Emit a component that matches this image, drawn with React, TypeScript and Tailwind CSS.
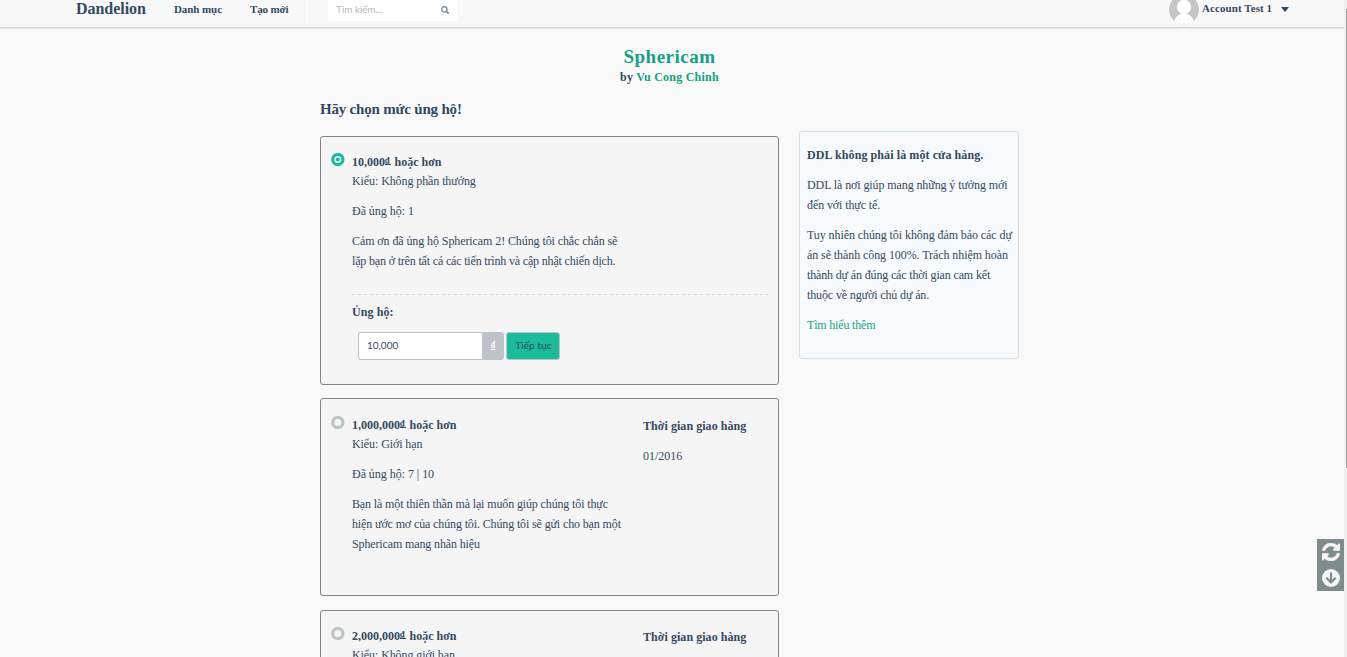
import { ReactNode } from "react";

function SearchIcon() {
  return (
    <svg className="mt-[6px] h-[8px] w-[8px] text-[#84939f]" viewBox="0 0 8 8" fill="none" stroke="currentColor">
      <circle cx="3.4" cy="3.4" r="2.7" strokeWidth="1.4" />
      <path d="M5.4 5.4l2 2" strokeWidth="1.7" strokeLinecap="round" />
    </svg>
  );
}

function RefreshIcon() {
  return (
    <svg className="h-[18px] w-[18px]" viewBox="0 0 1536 1536" fill="currentColor">
      <path
        stroke="currentColor"
        strokeWidth="50"
        d="M1511 928q0 5-1 7-64 268-268 434.500T764 1536q-146 0-282.500-55T238 1324l-129 129q-19 19-45 19t-45-19-19-45V960q0-26 19-45t45-19h448q26 0 45 19t19 45-19 45l-137 137q71 66 161 102t187 36q134 0 250-65t186-179q11-17 53-117 8-23 30-23h192q13 0 22.500 9.500t9.500 22.500zm25-800v448q0 26-19 45t-45 19h-448q-26 0-45-19t-19-45 19-45l138-138Q969 256 768 256q-134 0-250 65T332 500q-11 17-53 117-8 23-30 23H50q-13 0-22.500-9.500T18 608v-7q65-268 270-434.500T768 0q146 0 284 55.500T1297 212l130-129q19-19 45-19t45 19 19 45z"
      />
    </svg>
  );
}

function DownIcon() {
  return (
    <svg className="h-[18px] w-[18px]" viewBox="0 0 18 18" fill="none">
      <circle cx="9" cy="9" r="9" fill="currentColor" />
      <path d="M9 3.500v9.500M4.300 8.800L9 13.500l4.700-4.700" stroke="#7f8c8d" strokeWidth="2.200" />
    </svg>
  );
}

function Radio({ checked }: { checked?: boolean }) {
  return (
    <svg className="h-[14px] w-[14px]" viewBox="0 0 14 14">
      <circle cx="6.8" cy="6.5" r="5.1" fill="none" stroke={checked ? "#1abc9c" : "#bdc3c7"} strokeWidth="3.2" />
      {checked && <circle cx="6.8" cy="6.5" r="2" fill="#1abc9c" />}
    </svg>
  );
}

function Header() {
  return (
    <header className="flex h-[28px] shrink-0 items-start border-b border-[#d0d2d4] bg-[#f8f8f8] font-bold shadow-[0_1px_1px_#e8e8e8]">
      <a className="ml-[76px] w-[98px] text-[16px] leading-[18px] tracking-[-0.04px]">Dandelion</a>
      <a className="w-[76px] text-[11px] leading-[18px] tracking-[-0.08px]">Danh mục</a>
      <a className="w-[57px] text-[11px] leading-[18px] tracking-[-0.15px]">Tạo mới</a>
      <div className="h-[25px] w-px bg-white" />
      <div className="ml-[20px] flex h-[21px] w-[129px] items-start justify-between rounded-b-[3px] bg-white pr-[8px] pl-[8px] font-[Lato,sans-serif] text-[10px] leading-[19px] font-normal tracking-[-0.1px] text-[#b2bac2]">
        <span>Tìm kiếm...</span>
        <SearchIcon />
      </div>
      <div className="ml-auto flex h-[25px] w-[175px] items-start">
        <svg className="h-[25px] w-[30px]" viewBox="0 0 30 25">
          <defs>
            <clipPath id="avatar">
              <circle cx="15" cy="9.500" r="15" />
            </clipPath>
          </defs>
          <g clipPath="url(#avatar)">
            <rect width="30" height="25" fill="#c5c5c5" />
            <ellipse cx="15" cy="7" rx="7.2" ry="7.200" fill="#fff" />
            <path d="M4.500 25C5 18 9 13.500 15 13.500S25 18 25.500 25z" fill="#fff" />
          </g>
        </svg>
        <span className="ml-[3px] text-[11px] leading-[17px] tracking-[0.08px]">Account Test 1</span>
        <span className="mt-[7px] ml-[9px] h-0 w-0 border-x-[4px] border-t-[5px] border-x-transparent border-t-[#34495e]" />
      </div>
    </header>
  );
}

type RewardProps = {
  amount: string;
  kind: string;
  backers: string;
  lines: string[];
  delivery?: string;
  checked?: boolean;
  className: string;
  textClassName: string;
  radioClassName: string;
  children?: ReactNode;
};

function Reward({ amount, kind, backers, lines, delivery, checked, className, textClassName, radioClassName, children }: RewardProps) {
  return (
    <section className={"flex shrink-0 rounded-[3px] border border-[#7f8488] bg-[#f5f5f5] " + className}>
      <div className={"w-[31px] shrink-0 pl-[10px] " + radioClassName}>
        <Radio checked={checked} />
      </div>
      <div className={"flex-1 " + textClassName}>
        <div className="flex">
          <div className="w-[291px] whitespace-nowrap">
            <p className="font-bold">
              {amount}
              <span className="relative -top-[3px] mr-px inline-block h-[8px] w-[5.500px] border-b border-[#34495e] align-baseline text-[9px] leading-[6px]">₫</span> hoặc hơn
            </p>
            <p className="-mt-px tracking-[-0.09px]">Kiểu: {kind}</p>
            <p className="mt-[10px] tracking-[-0.04px]">Đã ủng hộ: {backers}</p>
            <div className="mt-[10px]">
              {lines.map((line, i) => (
                <p key={line} className={checked ? (i === 0 ? "tracking-[-0.09px]" : "tracking-[-0.17px]") : "tracking-[-0.13px]"}>
                  {line}
                </p>
              ))}
            </div>
          </div>
          {delivery && (
            <div className="pt-px">
              <p className="font-bold tracking-[0.05px]">Thời gian giao hàng</p>
              <p className="mt-[10px]">{delivery}</p>
            </div>
          )}
        </div>
        {children}
      </div>
    </section>
  );
}

function PledgeForm() {
  return (
    <div className="mt-[23px] mr-[10px]">
      <svg className="block h-px w-full">
        <line x1="0" y1="0.500" x2="417" y2="0.500" stroke="#d5d8da" strokeDasharray="3 3" />
      </svg>
      <p className="mt-[7px] font-bold tracking-[0.1px]">Ủng hộ:</p>
      <div className="mt-[10px] ml-[6px] flex h-[28px] font-[Lato,sans-serif] text-[10px] leading-[25px]">
        <div className="w-[124px] rounded-l-[3px] border border-r-0 border-[#bdc3c7] bg-white pl-[8px]">10,000</div>
        <div className="flex w-[22px] items-start justify-center rounded-r-[3px] bg-[#bdc3c7] pt-[9px] font-['Liberation_Serif',serif] text-[8px] font-bold text-white">
          <span className="h-[9px] border-b border-white leading-[7px]">₫</span>
        </div>
        <button className="ml-[2px] flex w-[54px] items-start justify-center rounded-[3px] border border-[#bdc3c7] bg-[#1abc9c] pl-px text-[10px] leading-[25px] tracking-[0.1px] whitespace-nowrap">
          Tiếp tục
        </button>
      </div>
    </div>
  );
}

function Notice() {
  return (
    <aside className="-mt-[5px] ml-[20px] h-[228px] w-[220px] shrink-0 rounded-[3px] border border-[#d9dce0] bg-[#f6fafc] pt-[13px] pl-[7px] whitespace-nowrap">
      <p className="font-bold tracking-[0.09px]">DDL không phải là một cửa hàng.</p>
      <p className="mt-[10px] tracking-[-0.1px]">
        DDL là nơi giúp mang những ý tưởng mới
        <br />
        đến với thực tế.
      </p>
      <p className="mt-[10px] tracking-[-0.08px]">
        Tuy nhiên chúng tôi không đảm bảo các dự
        <br />
        án sẽ thành công 100%. Trách nhiệm hoàn
        <br />
        <span className="tracking-[-0.15px]">thành dự án đúng các thời gian cam kết</span>
        <br />
        <span className="tracking-[-0.13px]">thuộc về người chủ dự án.</span>
      </p>
      <a className="mt-[10px] block tracking-[-0.18px] text-[#16a085]">Tìm hiểu thêm</a>
    </aside>
  );
}

export default function App() {
  return (
    <div className="flex h-[657px] overflow-hidden bg-[#f9f9f9] font-['Liberation_Serif',serif] text-[12px] leading-[20px] text-[#34495e]">
      <div className="flex w-[1344px] shrink-0 flex-col">
        <Header />
        <div className="mt-[17px] w-[1339px] shrink-0 text-center font-bold">
          <h1 className="text-[19px] leading-[24px] tracking-[0.5px] text-[#16a085]">Sphericam</h1>
          <p className="-mt-[2px] tracking-[0.24px]">
            by <span className="text-[#16a085]">Vu Cong Chinh</span>
          </p>
        </div>
        <h2 className="mt-[12px] ml-[320px] h-[37px] shrink-0 text-[15px] leading-[20px] font-bold tracking-[-0.2px]">Hãy chọn mức ủng hộ!</h2>
        <main className="ml-[320px] flex items-start">
          <div className="flex w-[459px] shrink-0 flex-col">
            <Reward
              className="h-[249px]"
              textClassName="pt-[15px]"
              radioClassName="pt-[16px]"
              checked
              amount="10,000"
              kind="Không phần thưởng"
              backers="1"
              lines={["Cảm ơn đã ủng hộ Sphericam 2! Chúng tôi chắc chắn sẽ", "lặp bạn ở trên tất cả các tiến trình và cập nhật chiến dịch."]}
            >
              <PledgeForm />
            </Reward>
            <Reward
              className="mt-[13px] h-[198px]"
              textClassName="pt-[16px]"
              radioClassName="pt-[17px]"
              amount="1,000,000"
              kind="Giới hạn"
              backers="7 | 10"
              delivery="01/2016"
              lines={["Bạn là một thiên thần mà lại muốn giúp chúng tôi thực", "hiện ước mơ của chúng tôi. Chúng tôi sẽ gửi cho bạn một", "Sphericam mang nhãn hiệu"]}
            />
            <Reward
              className="mt-[14px] h-[198px]"
              textClassName="pt-[15px]"
              radioClassName="pt-[16px]"
              amount="2,000,000"
              kind="Không giới hạn"
              backers="3"
              delivery="01/2016"
              lines={[]}
            />
          </div>
          <Notice />
        </main>
      </div>
      <div className="flex w-[3px] shrink-0 justify-end bg-[#f0f0f0] pt-[9px]">
        <div className="h-[459px] w-px bg-[#a0a0a0]" />
      </div>
      <div className="absolute top-[539px] left-[1317px] flex h-[52px] w-[27px] flex-col items-start justify-between bg-[#7f8c8d] py-[4px] pl-[4.500px] text-[#f5f5f5]">
        <RefreshIcon />
        <DownIcon />
      </div>
    </div>
  );
}
